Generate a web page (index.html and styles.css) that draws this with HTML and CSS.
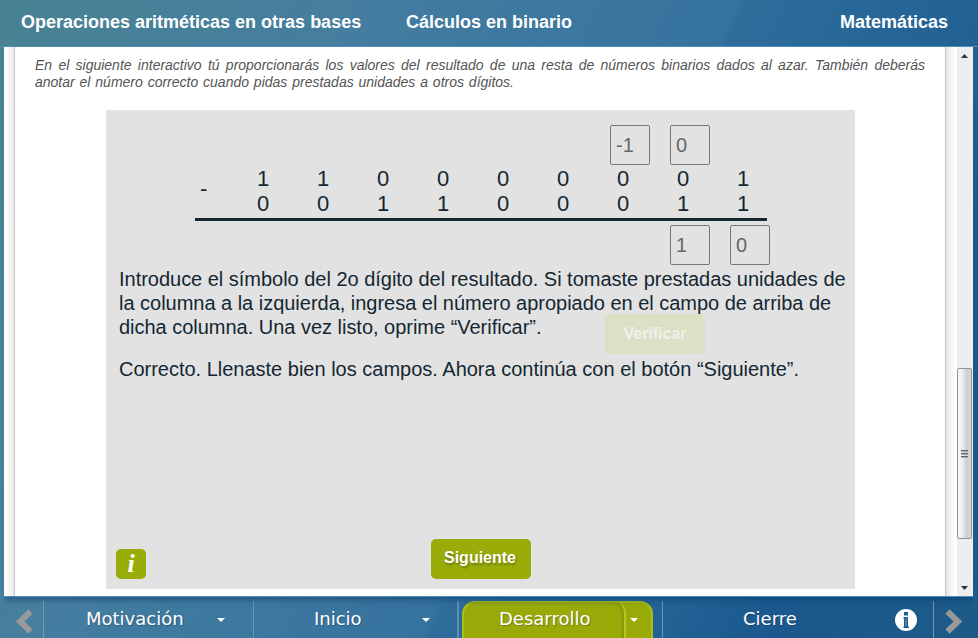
FILE: index.html
```html
<!DOCTYPE html>
<html lang="es">
<head>
<meta charset="utf-8">
<title>Cálculos en binario</title>
<link rel="stylesheet" href="styles.css">
</head>
<body>
<div class="app">
  <header class="top">
    <span class="unit">Operaciones aritméticas en otras bases</span>
    <span class="topic">Cálculos en binario</span>
    <span class="subject">Matemáticas</span>
  </header>
  <main class="viewport">
    <div class="edge edge-left"></div>
    <section class="page">
      <div class="intro">
        <p class="full">En el siguiente interactivo tú proporcionarás los valores del resultado de una resta de números binarios dados al azar. También deberás</p>
        <p class="last">anotar el número correcto cuando pidas prestadas unidades a otros dígitos.</p>
      </div>
      <div class="panel">
        <div class="row boxes borrow"><i></i><i></i><i></i><i></i><i></i><i></i><span class="box">-1</span><span class="box">0</span></div>
        <div class="operation">
          <span class="minus">-</span>
          <div class="row digits"><b>1</b><b>1</b><b>0</b><b>0</b><b>0</b><b>0</b><b>0</b><b>0</b><b>1</b></div>
          <div class="row digits"><b>0</b><b>0</b><b>1</b><b>1</b><b>0</b><b>0</b><b>0</b><b>1</b><b>1</b></div>
        </div>
        <div class="rule"></div>
        <div class="row boxes result"><i></i><i></i><i></i><i></i><i></i><i></i><i></i><span class="box">1</span><span class="box">0</span></div>
        <div class="message">
          <p class="m1">Introduce el símbolo del 2o dígito del resultado. Si tomaste prestadas unidades de</p>
          <p class="m2">la columna a la izquierda, ingresa el número apropiado en el campo de arriba de</p>
          <p class="m3">dicha columna. Una vez listo, oprime “Verificar”.</p>
          <p class="m4">Correcto. Llenaste bien los campos. Ahora continúa con el botón “Siguiente”.</p>
          <span class="verify">Verificar</span>
        </div>
        <div class="actions">
          <span class="help">i</span>
          <span class="next">Siguiente</span>
        </div>
      </div>
    </section>
    <div class="edge edge-right"></div>
    <div class="scrollbar">
      <svg class="tri" viewBox="0 0 7 4"><path d="M0 4 3.5 0 7 4z"/></svg>
      <div class="thumb"><u></u><u></u><u></u></div>
      <svg class="tri down" viewBox="0 0 7 4"><path d="M0 0h7L3.5 4z"/></svg>
    </div>
  </main>
  <nav class="bottom">
    <div class="arrow prev"><svg viewBox="0 0 17 25"><path d="M14.500 2.500 4 12.500l10.500 10" /></svg></div>
    <div class="tab motivacion"><span>Motivación</span><svg class="caret" viewBox="0 0 8 4"><path d="M0 0h8L4 4z"/></svg></div>
    <div class="tab inicio"><span>Inicio</span><svg class="caret" viewBox="0 0 8 4"><path d="M0 0h8L4 4z"/></svg></div>
    <div class="active">
      <div class="active-main"><span>Desarrollo</span></div>
      <svg class="caret" viewBox="0 0 8 4"><path d="M0 0h8L4 4z"/></svg>
    </div>
    <div class="tab cierre"><span>Cierre</span>
      <svg class="info" viewBox="0 0 22 22"><circle cx="11" cy="11" r="11"/><path class="stem" d="M9 3h4v3.500H9zM8.500 8H13v9.500h1V19H8.500v-1.500h.5v-8h-.5z"/><path class="core" d="M11 9.500v7.500"/></svg>
    </div>
    <div class="arrow following"><svg viewBox="0 0 17 25"><path d="M2.500 2.500 13 12.500l-10.500 10"/></svg></div>
  </nav>
</div>
</body>
</html>
```
FILE: styles.css
```css
* { box-sizing: border-box; }
body { margin: 0; font-family: "Liberation Sans", Arial, sans-serif; }
p { margin: 0; white-space: nowrap; }
.app {
  width: 978px; height: 638px; overflow: hidden;
  display: flex; flex-direction: column;
  background:
    linear-gradient(116.6deg, rgba(255,255,255,0) 0 35%, rgba(255,255,255,.03) 57.2%, transparent 57.4%),
    linear-gradient(116.6deg, #488292 0%, #457e9f 27%, #3b779f 42%, #2f6e9b 57%, #216194 76%, #1b588d 84%, #1c5b88 100%);
}
.top {
  height: 47px; flex: none; display: flex; padding: 12px 30px 0 21px;
  border-bottom: 1px solid #4a90b8;
  color: #fff; font-weight: bold; font-size: 18px; line-height: 21px; white-space: nowrap;
}
.unit { width: 385px; }
.subject { margin-left: auto; }

.viewport {
  height: 549px; flex: none; margin: 0 5px 0 4px; display: flex;
  background: #fff; box-shadow: 0 1px 0 #4a90b8, 0 3px 7px rgba(10,50,100,.6);
  clip-path: inset(0 0 -12px 0);
}
.edge { width: 11px; flex: none; }
.edge-left { background: linear-gradient(90deg, #fff 25%, #e8e8e8); border-right: 1px solid #c4c4c4; }
.edge-right { width: 12px; background: linear-gradient(90deg, #e4e4e4, #fff 80%); border-left: 1px solid #c4c4c4; }
.page { width: 930px; flex: none; padding: 10px 20px 0; }
.intro { height: 53px; color: #555; font-size: 14px; line-height: 17px; font-style: italic; }
.intro .full { width: 890px; text-align-last: justify; }
.intro .last { width: 479px; text-align-last: justify; }

.panel {
  width: 749px; height: 479px; margin-left: 71px; padding-top: 15px;
  background: #e2e2e2; color: #142732; display: flex; flex-direction: column;
}
.row { display: grid; grid-template-columns: repeat(9, 60px); margin-left: 127px; flex: none; }
.boxes { height: 40px; }
.box {
  width: 40px; height: 40px; margin-left: 17px; padding-left: 5px;
  border: 1px solid #777; border-radius: 2px;
  color: #666; font-size: 20px; line-height: 39px;
}
.operation { position: relative; height: 54px; padding-top: 1px; flex: none; }
.digits { height: 25px; line-height: 25px; font-size: 22px; text-align: center; }
.digits b { font-weight: normal; }
.minus { position: absolute; left: 94px; top: 11px; font-size: 22px; line-height: 25px; }
.rule { width: 572px; height: 3px; flex: none; margin-left: 89px; background: #142732; margin-top: -1px; }
.result { margin-top: 4px; }
.message { position: relative; margin: 2px 0 0 13px; height: 160px; font-size: 20px; letter-spacing: -.02px; line-height: 24px; flex: none; }
.message p { text-align-last: justify; }
.m1 { width: 726px; }
.m2 { width: 712px; }
.m3 { width: 421px; }
.m4 { width: 680px; margin-top: 18px; }
.verify {
  position: absolute; left: 486px; top: 47px; width: 100px; height: 40px;
  border-radius: 5px; background: rgba(217,223,180,.65); color: #f0f0ec;
  font-size: 16px; font-weight: bold; line-height: 40px; text-align: center;
}
.actions { margin-top: auto; padding: 0 0 10px 10px; display: flex; align-items: flex-end; }
.help {
  width: 30px; height: 30px; border-radius: 5px; background: #9aac08; color: #fff;
  font: italic bold 26px/30px "Liberation Serif", serif; text-align: center;
}
.next {
  width: 100px; height: 40px; margin-left: 285px; padding-right: 2px; border-radius: 5px;
  background: #9aac08; color: #fff; font-size: 16px; font-weight: bold;
  line-height: 38px; text-align: center; text-shadow: 1px 2px 2px rgba(60,80,0,.5);
}

.scrollbar { width: 16px; flex: none; padding-right: 1px; background: #eee; display: flex; flex-direction: column; align-items: center; }
.tri { width: 7px; height: 4px; margin-top: 7px; fill: #333; display: block; }
.thumb {
  width: 15px; height: 171px; margin-top: 310px; border: 1px solid #929292; border-radius: 2px;
  background: linear-gradient(90deg, #f6f6f6 10%, #e9e9eb 40%, #cdcdd1 65%, #dadadc);
  display: flex; flex-direction: column; gap: 1px; align-items: center; justify-content: center;
}
.thumb u { width: 7px; height: 2px; background: #666; border-bottom: 1px solid #aaa; }
.tri.down { margin-top: 47px; }

.bottom { height: 42px; flex: none; display: flex; padding-top: 5px; color: #fff; font: 18px/21px "DejaVu Sans", sans-serif; }
.arrow { width: 44px; flex: none; }
.arrow svg { width: 17px; height: 25px; display: block; margin: 8px 0 0 16px; fill: none; stroke: #999; stroke-width: 6; }
.prev { border-right: 1px solid #8495a0; }
.tab { display: flex; flex: none; padding-top: 7px; }
.tab, .active { text-shadow: 1px 1px 1px rgba(0,30,60,.3); }
.caret { width: 8px; height: 4px; flex: none; fill: #fff; margin-top: 10px; }
.motivacion { width: 210px; padding-left: 42px; border-right: 1px solid #6797b6; }
.motivacion span { width: 131px; }
.inicio { width: 205px; padding-left: 60px; border-right: 2px solid #5d8fb2; }
.inicio span { width: 108px; }
.active {
  width: 191px; flex: none; margin-left: 3px; display: flex;
  border: 2px solid #a9c018; border-bottom: 0; border-radius: 13px 13px 0 0; background: #99aa08;
}
.active-main {
  width: 162px; flex: none; padding: 6px 0 0 35px; margin-top: -1px;
  border-right: 2px solid #b2c91b; border-radius: 0 11px 0 0;
  box-shadow: inset -2px 1px 2px rgba(70,90,0,.25);
}
.active .caret { margin: 15px 0 0 4px; }
.cierre { width: 272px; margin-left: 9px; padding-left: 80px; border-left: 1px solid #6797b6; border-right: 1px solid #8495a0; }
.cierre span { width: 152px; }
.info { width: 22px; height: 22px; margin-top: 1px; }
.info circle { fill: #fff; }
.info .stem { fill: #20608f; }
.info .core { fill: none; stroke: #7fa5c0; stroke-width: 1; }
.following svg { margin-left: 11px; }
```
